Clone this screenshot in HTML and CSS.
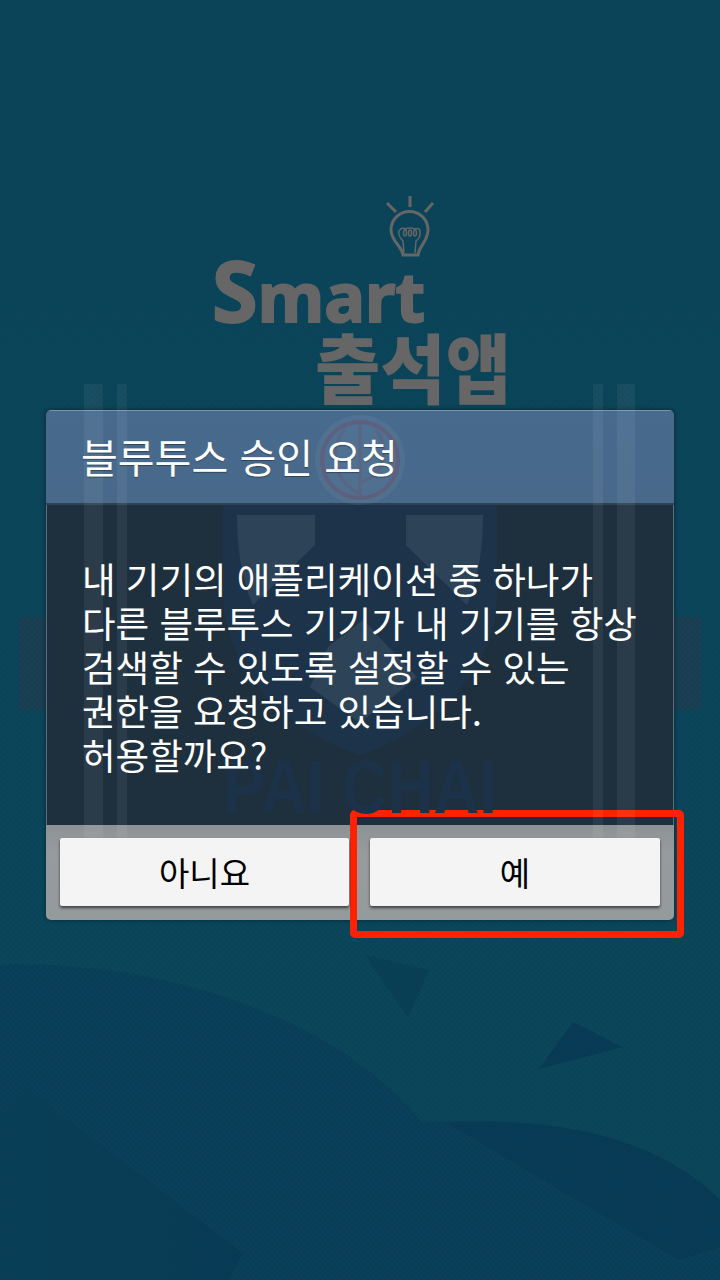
FILE: index.html
```html
<!DOCTYPE html>
<html lang="ko">
<head>
<meta charset="utf-8">
<title>블루투스 승인 요청</title>
<link rel="stylesheet" href="styles.css">
</head>
<body>
<main class="screen">
  <svg class="backdrop" viewBox="0 0 720 1280" aria-hidden="true">
    <defs>
      <pattern id="weave" width="6" height="6" patternUnits="userSpaceOnUse">
        <rect width="3" height="3" fill="#000" opacity=".025"/>
        <rect x="3" y="3" width="3" height="3" fill="#000" opacity=".025"/>
      </pattern>
      <linearGradient id="fade" x1="0" y1="0" x2="1" y2="0">
        <stop offset="0" stop-color="#083b55" stop-opacity=".15"/>
        <stop offset=".55" stop-color="#083b55" stop-opacity=".7"/>
        <stop offset="1" stop-color="#083b55"/>
      </linearGradient>
    </defs>
    <path class="art-shade" d="M0 965C130 960 320 1000 422 1122L445 1122L679 1260L720 1247V1280H0Z"/>
    <path class="art-deep" d="M445 1122C540 1118 650 1130 720 1200V1247L679 1260Z"/>
    <path fill="url(#fade)" d="M25 1087L243 1253L229 1280H0V1113Z"/>
    <path class="art-soft" d="M365 955L429 970L408 1018Z"/>
    <path class="art-deep" d="M573 1022L622 1047L539 1069Z"/>
    <rect class="art-bar" x="18" y="617" width="684" height="93" rx="3"/>
    <rect class="art-stripe" x="84" y="384" width="19" height="30"/>
    <rect class="art-stripe" x="117" y="384" width="10" height="30"/>
    <rect class="art-stripe" x="593" y="384" width="10" height="30"/>
    <rect class="art-stripe" x="617" y="384" width="18" height="30"/>
    <rect width="720" height="1280" fill="url(#weave)"/>
    <g class="logo-bulb">
      <path d="M410 196V207M387 203L396 212M433 203L425 212"/>
      <path d="M403 255C402 246 391 241 391 230A18.500 18.500 0 0 1 428 230C428 241 419 246 418 255Z"/>
    </g>
    <g class="logo-filament">
      <path d="M404 253L403 241Q398 236 399 231Q401 227 405 229Q410 227 415 229Q420 227 420 232Q421 237 416 241L415 253"/>
      <ellipse cx="405" cy="233" rx="1.500" ry="3"/>
      <ellipse cx="410" cy="233" rx="1.500" ry="3"/>
      <ellipse cx="415" cy="233" rx="1.500" ry="3"/>
    </g>
    <text class="logo-latin" x="212" y="322" textLength="213" lengthAdjust="spacingAndGlyphs"><tspan class="logo-cap">S</tspan>mart</text>
    <text class="logo-hangul" x="315" y="398" textLength="196" lengthAdjust="spacingAndGlyphs">출석앱</text>
  </svg>

  <section class="dialog">
    <svg class="dialog-art" viewBox="0 0 628 510" aria-hidden="true">
      <circle class="emblem-fill" cx="314" cy="50" r="45"/>
      <circle class="emblem-ring" cx="314" cy="50" r="38"/>
      <path class="emblem-line" d="M314 14V86M298 20C280 46 292 74 314 84M330 20C345 40 338 66 314 72"/>
      <path class="shield-blue" d="M177 95H451V190C447 260 390 320 314 345C238 320 181 260 177 190Z"/>
      <path class="shield-pale" d="M191 105H269V135L207 195C196 170 191 140 191 105Z"/>
      <path class="shield-pale" d="M360 105H437C437 140 432 170 421 195L360 135Z"/>
      <path class="shield-pale" d="M317 210L371 267L314 313L264 277L282 237Z"/>
      <rect class="stripe" x="38" y="0" width="19" height="487"/>
      <rect class="stripe" x="71" y="0" width="10" height="487"/>
      <rect class="stripe" x="547" y="0" width="10" height="487"/>
      <rect class="stripe" x="571" y="0" width="18" height="487"/>
      <text class="paichai" x="177" y="403" textLength="274" lengthAdjust="spacingAndGlyphs">PAI CHAI</text>
    </svg>
    <header class="dialog-title">
      <h1>블루투스 승인 요청</h1>
    </header>
    <div class="dialog-body">
      <p>내 기기의 애플리케이션 중 하나가<br>다른 블루투스 기기가 내 기기를 항상<br>검색할 수 있도록 설정할 수 있는<br>권한을 요청하고 있습니다.<br>허용할까요?</p>
    </div>
    <footer class="dialog-actions">
      <button class="action" type="button">아니요</button>
      <button class="action" type="button">예</button>
    </footer>
  </section>

  <div class="highlight" aria-hidden="true"></div>
</main>
</body>
</html>
```

FILE: styles.css
```css
* { box-sizing: border-box; }
html, body { margin: 0; padding: 0; }
body { font-family: "Noto Sans CJK KR", "Noto Sans", sans-serif; }

.screen {
  position: relative;
  width: 720px;
  height: 1280px;
  padding: 410px 46px 0;
  overflow: hidden;
  background: linear-gradient(180deg, #0b4459 0%, #0b465b 75%, #0b4559 100%);
}
.backdrop { position: absolute; inset: 0; width: 720px; height: 1280px; }
.art-shade { fill: #0a4059; }
.art-deep { fill: #083b55; }
.art-soft { fill: #0a4056; }
.art-bar { fill: #1a4053; }
.art-stripe { fill: #fff; opacity: .06; }

.logo-bulb path { fill: none; stroke: #666; stroke-width: 3; }
.logo-filament path, .logo-filament ellipse { fill: none; stroke: #666; stroke-width: 1.500; }
.logo-latin {
  font-family: "Noto Sans", sans-serif;
  font-weight: 700;
  font-size: 69px;
  fill: #666;
  stroke: #666;
  stroke-width: 2;
}
.logo-cap { font-size: 84px; }
.logo-hangul {
  font-family: "Noto Sans CJK KR", sans-serif;
  font-weight: 900;
  font-size: 76px;
  fill: #666;
}

.dialog {
  position: relative;
  display: flex;
  flex-direction: column;
  width: 628px;
  height: 510px;
  border-radius: 5px;
  overflow: hidden;
  box-shadow: 0 0 4px rgba(0, 0, 0, .45);
}
.dialog-art { position: absolute; inset: 0; width: 628px; height: 510px; z-index: 1; }
.emblem-fill { fill: #fff; opacity: .05; }
.emblem-ring { fill: none; stroke: #6a4f6c; stroke-width: 4; opacity: .5; }
.emblem-line { fill: none; stroke: #6a4f6c; stroke-width: 3; opacity: .35; }
.shield-blue { fill: #1c3f63; opacity: .3; }
.shield-pale { fill: #fff; opacity: .08; }
.stripe { fill: #fff; opacity: .06; }
.paichai {
  font-family: "Liberation Sans", sans-serif;
  font-weight: 700;
  font-size: 76px;
  fill: #1b3249;
}

.dialog-title {
  position: relative;
  height: 95px;
  padding: 18px 0 0 35px;
  background: linear-gradient(180deg, #476a8d 0%, #48698a 100%);
  border-top: 1px solid #7c93a9;
  border-bottom: 2px solid #2c4355;
}
.dialog-title h1 {
  position: relative;
  z-index: 2;
  margin: 0;
  color: #fff;
  font-size: 40px;
  font-weight: 400;
  line-height: 54px;
  text-shadow: 0 1px 1px rgba(0, 0, 0, .35);
}
.dialog-body {
  height: 320px;
  padding: 52px 0 0 35px;
  background: #1e2f3e;
  border-left: 1px solid #5d6c78;
  border-right: 1px solid #5d6c78;
}
.dialog-body p {
  position: relative;
  z-index: 2;
  margin: 0;
  color: #fff;
  font-size: 36.5px;
  line-height: 44px;
  white-space: nowrap;
}
.dialog-actions {
  display: grid;
  grid-template-columns: 289px 290px;
  gap: 21px;
  height: 95px;
  padding: 13px 14px 14px;
  background: linear-gradient(180deg, #8d9295 0%, #979b9d 30%, #959a9c 100%);
}
.action {
  position: relative;
  z-index: 2;
  height: 68px;
  border: 0;
  border-radius: 2px;
  padding: 0;
  background: #f4f4f4;
  color: #000;
  font-family: inherit;
  font-size: 33px;
  box-shadow: 0 2px 3px rgba(0, 0, 0, .6);
}

.highlight {
  position: absolute;
  left: 350px;
  top: 810px;
  width: 334px;
  height: 128px;
  border: 7px solid #ff2200;
  border-radius: 5px;
}
```
